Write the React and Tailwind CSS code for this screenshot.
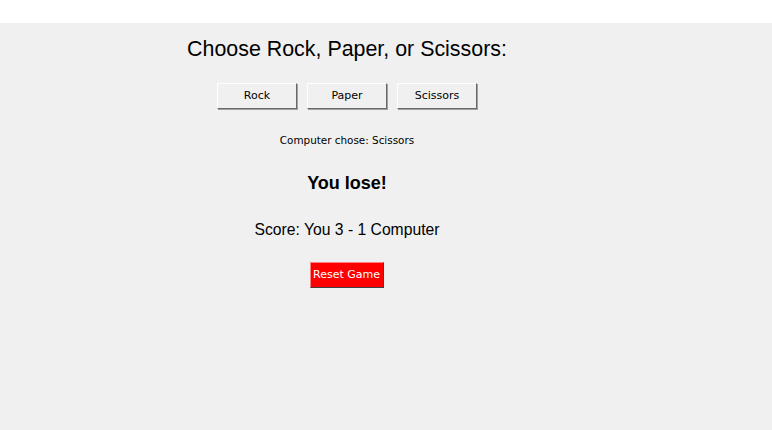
export default function App() {
  const choices = ["Rock", "Paper", "Scissors"];
  const btn =
    "w-[80px] h-[26px] bg-[#f0f0f0] border border-t-white border-l-white border-r-[#696969] border-b-[#696969] shadow-[1px_1px_0_#a0a0a0] text-[11px] text-black font-['DejaVu_Sans',sans-serif]";

  return (
    <div className="w-[772px] h-[430px] bg-white overflow-hidden">
      <div className="h-[23px] bg-white" />
      <div className="h-[407px] bg-[#f0f0f0]">
        <div className="w-[694px] flex flex-col items-center pt-[14px]">
          <h1 className="text-[21.4px] leading-[24px] text-black font-['Liberation_Sans',Arial,sans-serif]">
            Choose Rock, Paper, or Scissors:
          </h1>

          <div className="mt-[22px] flex gap-[10px]">
            {choices.map((c) => (
              <button key={c} className={btn}>
                {c}
              </button>
            ))}
          </div>

          <p className="mt-[23px] text-[10.4px] leading-[16px] text-black font-['DejaVu_Sans',sans-serif]">
            Computer chose: Scissors
          </p>

          <p className="mt-[24px] text-[18px] leading-[22px] font-bold text-black font-['Liberation_Sans',Arial,sans-serif]">
            You lose!
          </p>

          <p className="mt-[26px] text-[15.7px] leading-[20px] text-black font-['Liberation_Sans',Arial,sans-serif]">
            Score: You 3 - 1 Computer
          </p>

          <button className="mt-[22px] ml-[-1px] w-[74px] h-[26px] bg-[#ff0000] border border-t-[#ff8080] border-l-[#ff8080] border-r-[#404040] border-b-[#404040] text-[11px] text-white font-['DejaVu_Sans',sans-serif]">
            Reset Game
          </button>
        </div>
      </div>
    </div>
  );
}
